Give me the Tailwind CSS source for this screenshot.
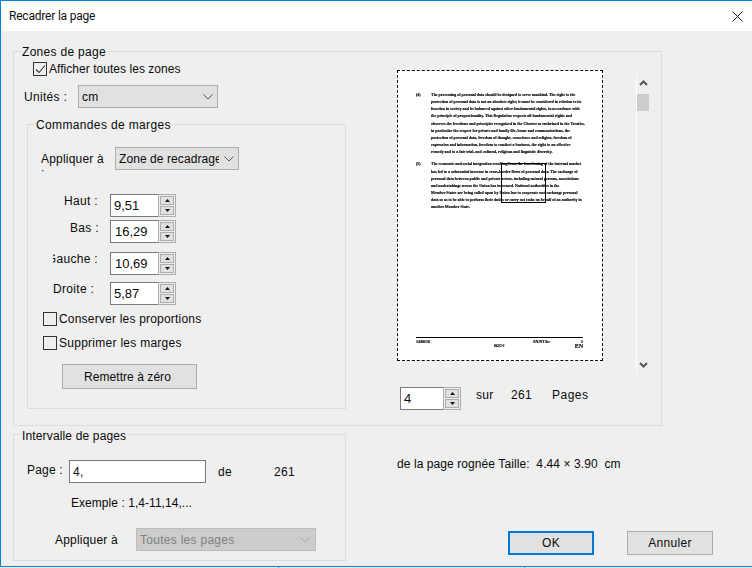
<!DOCTYPE html>
<html lang="fr">
<head>
<meta charset="utf-8">
<title>Recadrer la page</title>
<script src="https://cdn.jsdelivr.net/npm/@tailwindcss/browser@4"></script>
</head>
<body class="m-0 w-[752px] h-[568px] overflow-hidden bg-[#e9eef2] font-['Liberation_Sans',Arial,sans-serif] text-[12px] leading-[14px] text-[#0a0a0a]">
<div class="w-[752px] h-[567px] flex flex-col border-t border-l border-b border-[#0e7fd6] bg-[#efefef] box-border">
  <header class="h-[30px] shrink-0 bg-white flex items-center justify-between pl-[8px] pr-[9px] font-['Roboto',sans-serif]">
    <span class="text-[#111] tracking-[-0.2px]">Recadrer la page</span>
    <svg width="11" height="11" viewBox="0 0 11 11" class="block"><path d="M.5.5l10 10M10.5.5l-10 10" stroke="#111" stroke-width="1" fill="none"/></svg>
  </header>

  <!-- Zones de page -->
  <section class="mt-[20px] ml-[12px] w-[649px] h-[375px] shrink-0 border border-[#dcdcdc] box-border">
    <div class="-mt-[7px] ml-[7px] w-fit px-[1px] bg-[#efefef] tracking-[0.3px] h-[13px]">Zones de page</div>
    <div class="flex">
      <div class="w-[383px] shrink-0">
        <div class="mt-[4px] ml-[19px] flex items-center h-[14px]">
          <span class="w-[12px] h-[12px] border border-[#333] flex items-center justify-center box-content">
            <svg width="11" height="9" viewBox="0 0 11 9"><path d="M1 4.5l3 3 6-7" stroke="#333" stroke-width="1.1" fill="none"/></svg>
          </span>
          <span class="ml-[2px] tracking-[0.04px]">Afficher toutes les zones</span>
        </div>
        <div class="mt-[9px] ml-[10px] flex items-center h-[23px]">
          <span class="w-[54px] tracking-[0.32px]">Unités :</span>
          <div class="w-[140px] h-[23px] box-border border border-[#adadad] bg-[#e1e1e1] flex items-center justify-between pl-[3px] pr-[4px]">
            <span class="tracking-[0.32px]">cm</span>
            <svg width="10" height="6" viewBox="0 0 10 6"><path d="M.5.5L5 5 9.5.5" stroke="#555" fill="none"/></svg>
          </div>
        </div>

        <!-- Commandes de marges -->
        <div class="mt-[16px] ml-[13px] w-[319px] h-[285px] border border-[#dcdcdc] box-border">
          <div class="-mt-[7px] ml-[7px] w-fit px-[1px] bg-[#efefef] tracking-[0.36px] h-[13px]">Commandes de marges</div>
          <div class="mt-[16px] ml-[13px] flex items-start h-[23px]">
            <div class="mt-[5px] w-[74px] h-[21px] overflow-hidden pr-[6px] tracking-[0.2px]">Appliquer à :</div>
            <div class="w-[124px] h-[23px] box-border border border-[#adadad] bg-[#e1e1e1] flex items-center pl-[3px] pr-[4px]">
              <span class="w-[100px] overflow-hidden whitespace-nowrap tracking-[0.08px]">Zone de recadrage</span>
              <svg class="ml-auto" width="10" height="6" viewBox="0 0 10 6"><path d="M.5.5L5 5 9.5.5" stroke="#555" fill="none"/></svg>
            </div>
          </div>

          <div class="mt-[24px] flex items-start h-[23px]">
            <div class="w-[82px] pl-[36px] tracking-[0.32px] whitespace-nowrap">Haut :</div>
            <div class="flex h-[23px]">
              <div class="w-[48px] box-border border border-r-0 border-[#7a7a7a] bg-white flex items-center pl-[3px] text-[13px]">9,51</div>
              <div class="w-[18px] box-border border border-[#adadad] bg-[#efefef] flex flex-col gap-px p-px">
                <span class="flex-1 border border-[#adadad] bg-[#e1e1e1] flex items-center justify-center"><svg width="5" height="3" viewBox="0 0 5 3"><path d="M2.5 0L5 3H0z" fill="#111"/></svg></span>
                <span class="flex-1 border border-[#adadad] bg-[#e1e1e1] flex items-center justify-center"><svg width="5" height="3" viewBox="0 0 5 3"><path d="M2.5 3L5 0H0z" fill="#111"/></svg></span>
              </div>
            </div>
          </div>
          <div class="mt-[3px] flex items-start h-[23px]">
            <div class="mt-px w-[82px] pl-[42px] tracking-[0.32px] whitespace-nowrap">Bas :</div>
            <div class="flex h-[23px]">
              <div class="w-[48px] box-border border border-r-0 border-[#7a7a7a] bg-white flex items-center pl-[4px] text-[13px]">16,29</div>
              <div class="w-[18px] box-border border border-[#adadad] bg-[#efefef] flex flex-col gap-px p-px">
                <span class="flex-1 border border-[#adadad] bg-[#e1e1e1] flex items-center justify-center"><svg width="5" height="3" viewBox="0 0 5 3"><path d="M2.5 0L5 3H0z" fill="#111"/></svg></span>
                <span class="flex-1 border border-[#adadad] bg-[#e1e1e1] flex items-center justify-center"><svg width="5" height="3" viewBox="0 0 5 3"><path d="M2.5 3L5 0H0z" fill="#111"/></svg></span>
              </div>
            </div>
          </div>
          <div class="mt-[9px] flex items-start h-[23px]">
            <div class="w-[82px] pl-[25px] pr-[12px]"><div class="flex justify-end overflow-hidden whitespace-nowrap tracking-[0.32px]"><span class="shrink-0">Gauche :</span></div></div>
            <div class="flex h-[23px]">
              <div class="w-[48px] box-border border border-r-0 border-[#7a7a7a] bg-white flex items-center pl-[4px] text-[13px]">10,69</div>
              <div class="w-[18px] box-border border border-[#adadad] bg-[#efefef] flex flex-col gap-px p-px">
                <span class="flex-1 border border-[#adadad] bg-[#e1e1e1] flex items-center justify-center"><svg width="5" height="3" viewBox="0 0 5 3"><path d="M2.5 0L5 3H0z" fill="#111"/></svg></span>
                <span class="flex-1 border border-[#adadad] bg-[#e1e1e1] flex items-center justify-center"><svg width="5" height="3" viewBox="0 0 5 3"><path d="M2.5 3L5 0H0z" fill="#111"/></svg></span>
              </div>
            </div>
          </div>
          <div class="mt-[7px] flex items-start h-[23px]">
            <div class="w-[82px] pl-[25px] tracking-[0.32px] whitespace-nowrap">Droite :</div>
            <div class="flex h-[23px]">
              <div class="w-[48px] box-border border border-r-0 border-[#7a7a7a] bg-white flex items-center pl-[3px] text-[13px]">5,87</div>
              <div class="w-[18px] box-border border border-[#adadad] bg-[#efefef] flex flex-col gap-px p-px">
                <span class="flex-1 border border-[#adadad] bg-[#e1e1e1] flex items-center justify-center"><svg width="5" height="3" viewBox="0 0 5 3"><path d="M2.5 0L5 3H0z" fill="#111"/></svg></span>
                <span class="flex-1 border border-[#adadad] bg-[#e1e1e1] flex items-center justify-center"><svg width="5" height="3" viewBox="0 0 5 3"><path d="M2.5 3L5 0H0z" fill="#111"/></svg></span>
              </div>
            </div>
          </div>

          <div class="mt-[7px] ml-[15px] flex items-center h-[14px]">
            <span class="w-[12px] h-[12px] border border-[#333] box-content"></span>
            <span class="ml-[2px] tracking-[0.2px]">Conserver les proportions</span>
          </div>
          <div class="mt-[10px] ml-[15px] flex items-center h-[14px]">
            <span class="w-[12px] h-[12px] border border-[#333] box-content"></span>
            <span class="ml-[2px] tracking-[0.27px]">Supprimer les marges</span>
          </div>
          <div class="mt-[14px] ml-[34px] w-[135px] h-[25px] box-border border border-[#adadad] bg-[#e1e1e1] flex items-center justify-center pr-[4px] tracking-[0.05px]">Remettre à zéro</div>
        </div>
      </div>

      <!-- Aperçu -->
      <div class="flex-1">
        <div class="mt-[12px] flex items-start h-[304px]">
          <div class="relative w-[206px] h-[291px] box-border border border-dashed border-black bg-white">
            <div class="h-full flex flex-col font-['Liberation_Serif',serif] font-bold text-[3.95px] leading-[7.15px] whitespace-nowrap text-black pl-[18px] pr-[19px] pt-[20px] blur-[0.25px] [-webkit-text-stroke:0.15px_black]">
              <div class="grid grid-cols-[15px_1fr]">
                <span>(4)</span>
                <div>
                  <div>The processing of personal data should be designed to serve mankind. The right to the</div>
                  <div>protection of personal data is not an absolute right; it must be considered in relation to its</div>
                  <div>function in society and be balanced against other fundamental rights, in accordance with</div>
                  <div>the principle of proportionality. This Regulation respects all fundamental rights and</div>
                  <div>observes the freedoms and principles recognised in the Charter as enshrined in the Treaties,</div>
                  <div>in particular the respect for private and family life, home and communications, the</div>
                  <div>protection of personal data, freedom of thought, conscience and religion, freedom of</div>
                  <div>expression and information, freedom to conduct a business, the right to an effective</div>
                  <div>remedy and to a fair trial, and cultural, religious and linguistic diversity.</div>
                </div>
              </div>
              <div class="grid grid-cols-[15px_1fr] mt-[5px]">
                <span>(5)</span>
                <div>
                  <div>The economic and social integration resulting from the functioning of the internal market</div>
                  <div>has led to a substantial increase in cross-border flows of personal data. The exchange of</div>
                  <div>personal data between public and private actors, including natural persons, associations</div>
                  <div>and undertakings across the Union has increased. National authorities in the</div>
                  <div>Member States are being called upon by Union law to cooperate and exchange personal</div>
                  <div>data so as to be able to perform their duties or carry out tasks on behalf of an authority in</div>
                  <div>another Member State.</div>
                </div>
              </div>
              <div class="mt-auto mb-[11px] pt-[2px] leading-[5px]">
                <div class="flex justify-between"><span>14/06/16</span><span class="ml-auto mr-[31px]">AN/NT/be</span><span>5</span></div>
                <div class="flex"><span class="ml-[78px] text-[3.4px]">06/22-2</span><span class="ml-auto text-[6px]">EN</span></div>
              </div>
            </div>
            <div class="absolute left-[18px] right-[19px] bottom-[22px] border-t-[1.5px] border-black"></div>
            <div class="absolute left-[103px] top-[92px] w-[45px] h-[40px] border border-black"></div>
          </div>
          <div class="relative ml-[33px] mt-[4px] w-[14px] h-[300px] border-l border-white">
            <svg class="absolute left-[2px] top-[6px]" width="9" height="6" viewBox="0 0 9 6"><path d="M1 5l3.5-3.5L8 5" stroke="#555" stroke-width="2" fill="none"/></svg>
            <div class="absolute left-0 top-[20px] w-[12px] h-[17px] bg-[#cdcdcd]"></div>
            <svg class="absolute left-[2px] top-[288px]" width="9" height="6" viewBox="0 0 9 6"><path d="M1 1l3.5 3.5L8 1" stroke="#555" stroke-width="2" fill="none"/></svg>
          </div>
        </div>
        <div class="mt-[13px] ml-[3px] flex items-start h-[23px]">
          <div class="flex h-[23px]">
            <div class="w-[43px] box-border border border-r-0 border-[#7a7a7a] bg-white flex items-center pl-[3px] text-[13px]">4</div>
            <div class="w-[18px] box-border border border-[#adadad] bg-[#efefef] flex flex-col gap-px p-px">
              <span class="flex-1 border border-[#adadad] bg-[#e1e1e1] flex items-center justify-center"><svg width="5" height="3" viewBox="0 0 5 3"><path d="M2.5 0L5 3H0z" fill="#111"/></svg></span>
              <span class="flex-1 border border-[#adadad] bg-[#e1e1e1] flex items-center justify-center"><svg width="5" height="3" viewBox="0 0 5 3"><path d="M2.5 3L5 0H0z" fill="#111"/></svg></span>
            </div>
          </div>
          <span class="mt-px ml-[15px] w-[35px] tracking-[0.32px]">sur</span>
          <span class="mt-px w-[41px] tracking-[0.32px]">261</span>
          <span class="mt-px tracking-[0.5px]">Pages</span>
        </div>
      </div>
    </div>
  </section>

  <!-- Bas -->
  <div class="flex">
    <section class="mt-[8px] ml-[12px] w-[333px] h-[127px] shrink-0 border border-[#dcdcdc] box-border">
      <div class="-mt-[6px] ml-[7px] w-fit px-[1px] bg-[#efefef] tracking-[0.15px] h-[12px]">Intervalle de pages</div>
      <div class="mt-[19px] ml-[13px] flex items-start h-[23px]">
        <span class="w-[42px] mt-[3px] tracking-[0.2px]">Page :</span>
        <div class="w-[137px] h-[23px] box-border border border-[#7a7a7a] bg-white flex items-center pl-[3px] tracking-[0.32px]">4,</div>
        <span class="mt-[5px] ml-[12px] w-[56px] tracking-[0.32px]">de</span>
        <span class="mt-[5px] tracking-[0.32px]">261</span>
      </div>
      <div class="mt-[13px] ml-[57px] tracking-[0.05px] h-[14px]">Exemple : 1,4-11,14,...</div>
      <div class="mt-[18px] ml-[41px] flex items-center h-[23px]">
        <span class="w-[81px] tracking-[0.2px]">Appliquer à</span>
        <div class="w-[180px] h-[23px] box-border border border-[#bcbcbc] bg-[#cccccc] flex items-center justify-between pl-[3px] pr-[5px] text-[#7f7f7f]">
          <span class="tracking-[0.28px]">Toutes les pages</span>
          <svg width="10" height="6" viewBox="0 0 10 6"><path d="M.5.5L5 5 9.5.5" stroke="#a5a5a5" fill="none"/></svg>
        </div>
      </div>
    </section>
    <div class="ml-[51px]">
      <div class="mt-[31px] h-[14px] tracking-[0.08px] whitespace-pre">de la page rognée Taille:  4.44 × 3.90  cm</div>
      <div class="mt-[60px] ml-[111px] flex gap-[33px]">
        <div class="w-[86px] h-[24px] box-border border-2 border-[#0078d7] bg-[#e1e1e1] flex items-center justify-center tracking-[0.32px]">OK</div>
        <div class="w-[86px] h-[24px] box-border border border-[#adadad] bg-[#e1e1e1] flex items-center justify-center tracking-[0.32px]">Annuler</div>
      </div>
    </div>
  </div>
</div>
<div class="h-px flex"><span class="ml-[278px] w-px bg-[#8a8a8a]"></span><span class="ml-[245px] w-px bg-[#8a8a8a]"></span></div>
</body>
</html>
